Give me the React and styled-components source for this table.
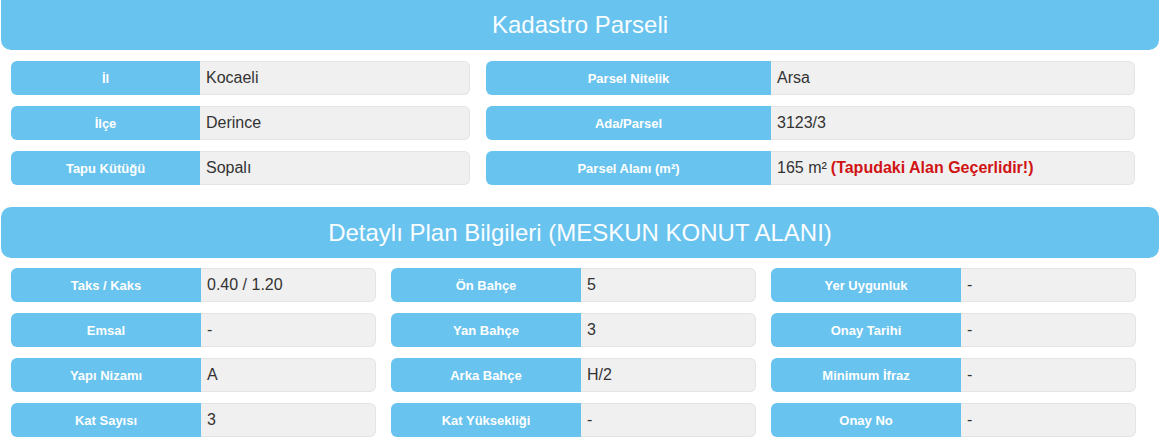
import styled, { createGlobalStyle } from 'styled-components';

const GlobalStyle = createGlobalStyle`
  body {
    margin: 0;
    background: #ffffff;
    font-family: "Liberation Sans", Arial, sans-serif;
  }
`;

const Page = styled.div`
  width: 1161px;
`;

const SectionHeader = styled.div`
  margin-left: 1px;
  width: 1158px;
  height: ${p => p.$height}px;
  margin-top: ${p => p.$top}px;
  background: #68c3ee;
  border-radius: ${p => (p.$first ? '0 0 10px 10px' : '10px')};
  display: flex;
  align-items: center;
  justify-content: center;
  color: #fafdff;
  font-size: 24px;
`;

const Grid = styled.div`
  display: grid;
  grid-template-columns: ${p => p.$cols};
  column-gap: ${p => p.$gap}px;
  row-gap: 11px;
  padding-left: 11px;
  margin-top: ${p => p.$top}px;
`;

const Row = styled.div`
  display: grid;
  grid-template-columns: ${p => p.$label}px 1fr;
  height: 34px;
`;

const Label = styled.div`
  background: #68c3ee;
  border-radius: 6px 0 0 6px;
  color: #ffffff;
  font-weight: bold;
  font-size: 13px;
  display: flex;
  align-items: center;
  justify-content: center;
`;

const Value = styled.div`
  background: #f0f0f0;
  border: 1px solid #e4e4e4;
  border-left: none;
  border-radius: 0 6px 6px 0;
  color: #333333;
  font-size: 16px;
  display: flex;
  align-items: center;
  padding-left: 6px;
  white-space: nowrap;
`;

const Warning = styled.span`
  color: #d01414;
  font-weight: bold;
  margin-left: 4px;
`;

const parselLeft = [
  ['İl', 'Kocaeli'],
  ['İlçe', 'Derince'],
  ['Tapu Kütüğü', 'Sopalı'],
];

const parselRight = [
  ['Parsel Nitelik', 'Arsa'],
  ['Ada/Parsel', '3123/3'],
  ['Parsel Alanı (m²)', 'alan'],
];

const planRows = [
  [['Taks / Kaks', '0.40 / 1.20'], ['Ön Bahçe', '5'], ['Yer Uygunluk', '-']],
  [['Emsal', '-'], ['Yan Bahçe', '3'], ['Onay Tarihi', '-']],
  [['Yapı Nizamı', 'A'], ['Arka Bahçe', 'H/2'], ['Minimum İfraz', '-']],
  [['Kat Sayısı', '3'], ['Kat Yüksekliği', '-'], ['Onay No', '-']],
];

function renderValue(value) {
  if (value === 'alan') {
    return (
      <>
        165 m² <Warning>(Tapudaki Alan Geçerlidir!)</Warning>
      </>
    );
  }
  return value;
}

export default function App() {
  // sol ve sağ kolonları satır sırasına göre birleştir
  const parselCells = [];
  parselLeft.forEach((item, i) => {
    parselCells.push({ item, label: 189 });
    parselCells.push({ item: parselRight[i], label: 285 });
  });

  return (
    <Page>
      <GlobalStyle />
      <SectionHeader $first $height={50} $top={0}>Kadastro Parseli</SectionHeader>
      <Grid $cols="459px 649px" $gap={16} $top={11}>
        {parselCells.map(({ item, label }, i) => (
          <Row key={i} $label={label}>
            <Label>{item[0]}</Label>
            <Value>{renderValue(item[1])}</Value>
          </Row>
        ))}
      </Grid>
      <SectionHeader $height={51} $top={22}>
        Detaylı Plan Bilgileri (MESKUN KONUT ALANI)
      </SectionHeader>
      <Grid $cols="365px 365px 365px" $gap={15} $top={10}>
        {planRows.flat().map((item, i) => (
          <Row key={i} $label={190}>
            <Label>{item[0]}</Label>
            <Value>{item[1]}</Value>
          </Row>
        ))}
      </Grid>
    </Page>
  );
}
